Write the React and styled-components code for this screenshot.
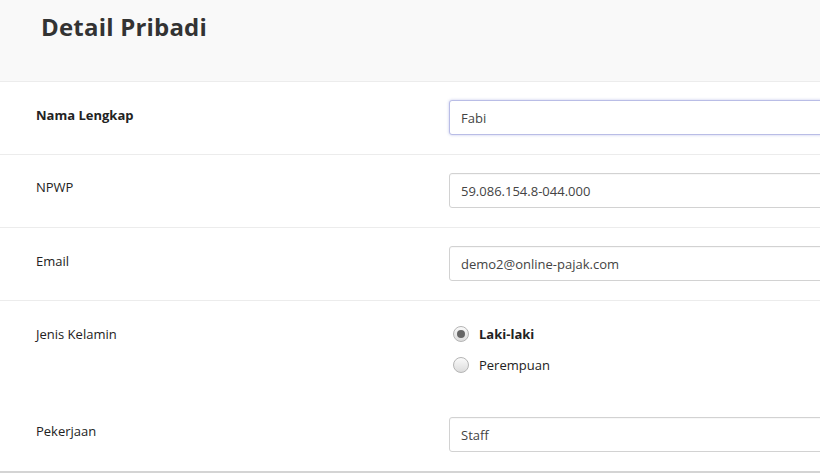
import React from 'react';
import styled, { createGlobalStyle } from 'styled-components';

const GlobalStyle = createGlobalStyle`
    html, body {
        margin: 0;
        padding: 0;
        background: #fff;
        font-family: "Open Sans", "Noto Sans", sans-serif;
        color: #333;
        overflow: hidden;
    }
`;

const Page = styled.div`
    width: 820px;
    height: 473px;
    overflow: hidden;
`;

const Header = styled.div`
    height: 82px;
    background: #f9f9f9;
    border-bottom: 1px solid #ececec;
    box-sizing: border-box;
    padding: 10px 0 0 41px;
`;

const Title = styled.h1`
    margin: 0;
    font-size: 24px;
    font-weight: 700;
    line-height: 34px;
    color: #333;
    letter-spacing: 0.2px;
`;

const Form = styled.div`
    border-bottom: 2px solid #d4d4d4;
`;

const Row = styled.div`
    display: grid;
    grid-template-columns: 449px 1fr;
    height: ${p => p.h}px;
    box-sizing: border-box;
    border-bottom: ${p => (p.last ? 'none' : '1px solid #ececec')};
`;

const Label = styled.div`
    padding: ${p => p.top}px 0 0 36px;
    font-size: 13px;
    line-height: 18px;
    font-weight: ${p => (p.bold ? 700 : 400)};
    color: #222;
`;

const Field = styled.div`
    padding-top: ${p => p.top}px;
`;

const Input = styled.input`
    display: block;
    width: 420px;
    height: 35px;
    box-sizing: border-box;
    padding: 0 11px;
    font-family: "Open Sans", "Noto Sans", sans-serif;
    font-size: 13px;
    color: #444;
    background: #fff;
    border: 1px solid ${p => (p.focused ? '#b9bde6' : '#d2d2d2')};
    border-radius: 3px 0 0 3px;
    box-shadow: ${p => (p.focused ? '0 0 3px rgba(120, 130, 210, 0.45)' : 'inset 0 1px 1px rgba(0,0,0,0.03)')};
    outline: none;
`;

const RadioGroup = styled.div`
    display: flex;
    flex-direction: column;
    gap: 13px;
    padding: 24px 0 0 4px;
`;

const RadioOption = styled.label`
    display: flex;
    align-items: center;
    gap: 10px;
    font-size: 13px;
    line-height: 18px;
    font-weight: ${p => (p.checked ? 700 : 400)};
    color: #222;
`;

const RadioDot = styled.span`
    position: relative;
    width: 16px;
    height: 16px;
    border-radius: 50%;
    box-sizing: border-box;
    border: 1px solid #b5b5b5;
    background: linear-gradient(#fafafa, #dcdcdc);

    &::after {
        content: '';
        display: ${p => (p.checked ? 'block' : 'none')};
        position: absolute;
        left: 3px;
        top: 3px;
        width: 8px;
        height: 8px;
        border-radius: 50%;
        background: #666;
    }
`;

const App = () => {
    return (
        <Page>
            <GlobalStyle />
            <Header>
                <Title>Detail Pribadi</Title>
            </Header>
            <Form>
                <Row h={73}>
                    <Label bold top={24}>Nama Lengkap</Label>
                    <Field top={18}><Input focused defaultValue="Fabi" /></Field>
                </Row>
                <Row h={73}>
                    <Label top={23}>NPWP</Label>
                    <Field top={18}><Input defaultValue="59.086.154.8-044.000" /></Field>
                </Row>
                <Row h={73}>
                    <Label top={24}>Email</Label>
                    <Field top={18}><Input defaultValue="demo2@online-pajak.com" /></Field>
                </Row>
                <Row h={97} last>
                    <Label top={24}>Jenis Kelamin</Label>
                    <RadioGroup>
                        <RadioOption checked><RadioDot checked />Laki-laki</RadioOption>
                        <RadioOption><RadioDot />Perempuan</RadioOption>
                    </RadioGroup>
                </Row>
                <Row h={73} last>
                    <Label top={24}>Pekerjaan</Label>
                    <Field top={19}><Input defaultValue="Staff" /></Field>
                </Row>
            </Form>
        </Page>
    );
};

export default App;
